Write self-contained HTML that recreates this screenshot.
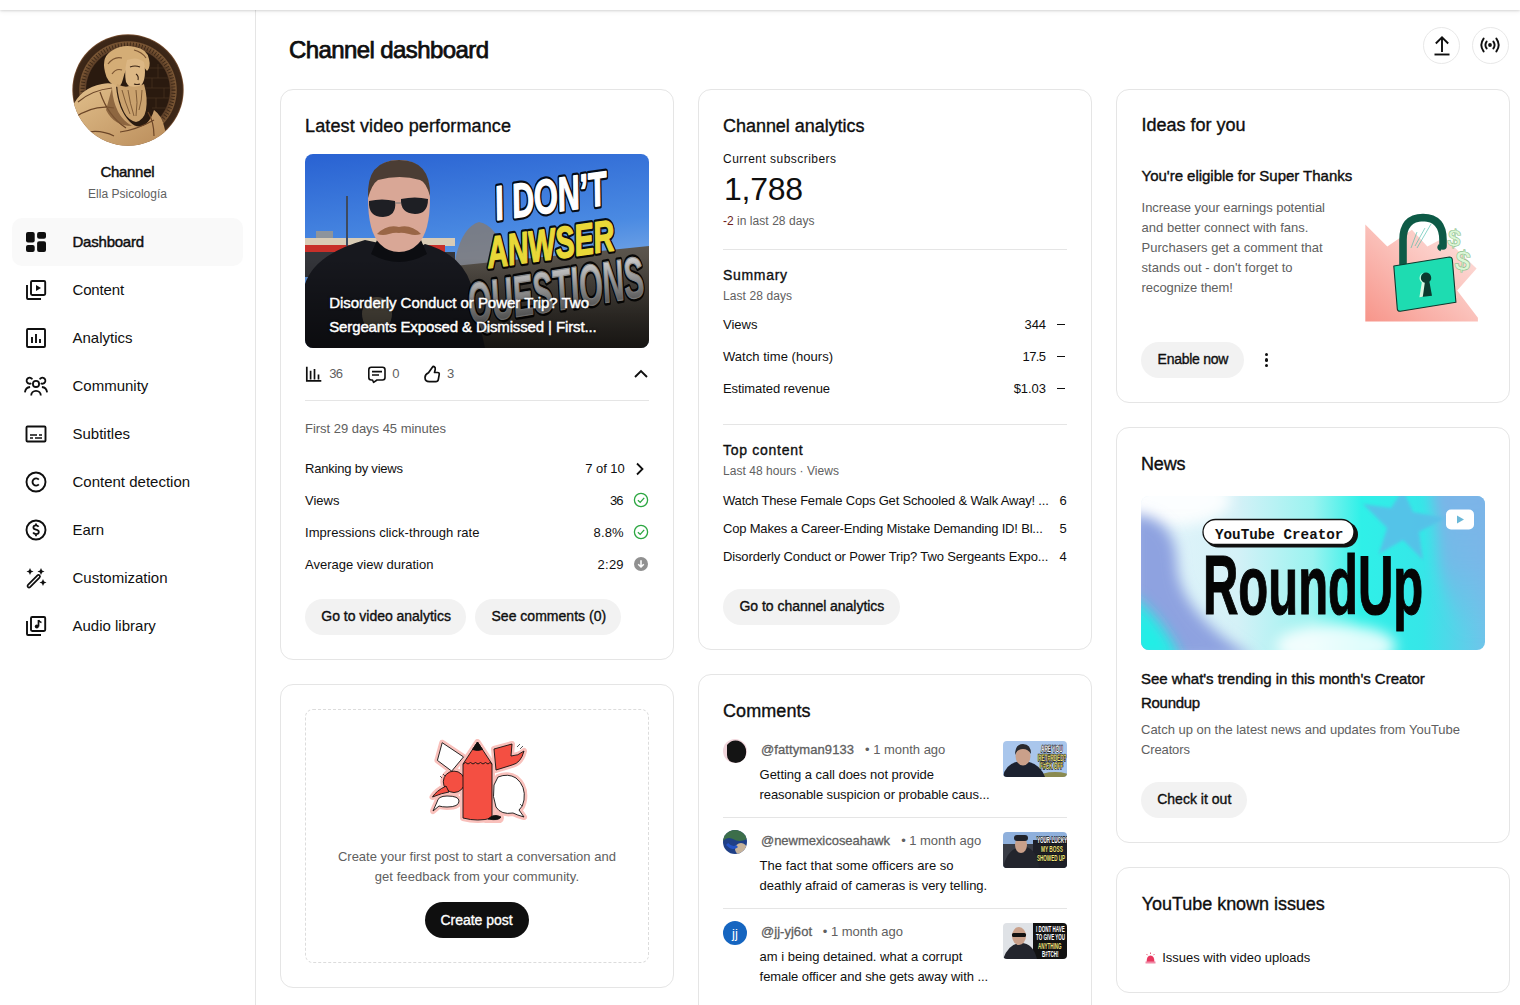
<!DOCTYPE html>
<html><head><meta charset="utf-8"><title>Channel dashboard - YouTube Studio</title>
<style>
html,body{margin:0;padding:0;}
body{width:1520px;height:1005px;overflow:hidden;position:relative;background:#fff;font-family:"Liberation Sans",sans-serif;}
.t{position:absolute;white-space:pre;}
.b{position:absolute;display:block;}
</style></head><body>
<div class="b" style="left:0px;top:0px;width:1520px;height:10px;background:#fff;box-shadow:0 1px 2px rgba(0,0,0,.12),0 2px 5px rgba(0,0,0,.05);z-index:5;"></div>
<div class="b" style="left:255px;top:0px;width:1px;height:1005px;background:#e5e5e5;"></div>
<svg class="b" style="left:72px;top:34px;" width="112" height="112" viewBox="0 0 112 112">
<defs>
<clipPath id="avc"><circle cx="56" cy="56" r="55.7"/></clipPath>
<radialGradient id="avr" cx="50%" cy="50%" r="50%">
<stop offset="0.74" stop-color="#2a1a0f"/><stop offset="0.76" stop-color="#5e4028"/><stop offset="0.86" stop-color="#7a5634"/><stop offset="0.88" stop-color="#3a2516"/><stop offset="0.97" stop-color="#3e2818"/><stop offset="1" stop-color="#946440"/>
</radialGradient>
<linearGradient id="avf" x1="0" y1="0" x2="1" y2="1"><stop offset="0" stop-color="#e2c08c"/><stop offset="1" stop-color="#b88a58"/></linearGradient>
</defs>
<g clip-path="url(#avc)">
<rect width="112" height="112" fill="url(#avr)"/>
<circle cx="56" cy="56" r="45.5" fill="none" stroke="#24150b" stroke-width="4" stroke-dasharray=".8 2.2" opacity=".7"/>
<path d="M72 34 H98 M70 44 H100 M72 54 H101 M74 64 H99 M80 74 H96 M86 30 V44 M80 44 V54 M92 54 V64 M84 64 V74" stroke="#4d3523" stroke-width=".6"/>
<path d="M33 38 q-4-16 8-22 q10-6 22-3 q12 2 14 12 q2 8 -2 12 q-6 -10 -16 -8 q-6 6 -8 16 q-2 8 -6 8 q-10 -4 -12 -15z" fill="#d4ad76"/>
<path d="M36 30 q6-8 14-6 M40 40 q4-6 10-4 M62 16 q8 2 12 8" stroke="#7a5432" stroke-width="1.2" fill="none"/>
<path d="M55 26 q10-4 17 2 q2 10 0 18 q-2 6 -6 8 q-8 2 -12 -6 q-2 -10 1 -22z" fill="#dcb784"/>
<path d="M58 33 q5-2 10 0 M64 40 q3 2 2 6 M62 50 q3 1 6 0" stroke="#3a2414" stroke-width="1.1" fill="none"/>
<path d="M45 50 q8 4 12 2 q8 2 15 -2 q4 14 2 26 q-2 10 -10 12 q-8 -2 -12 -10 q-6 -12 -7 -28z" fill="#caa26e"/>
<path d="M50 56 q3 12 8 24 M56 56 q2 14 6 26 M64 56 q2 12 0 26 M70 56 q0 10 -3 20" stroke="#6d4a2a" stroke-width=".8" fill="none"/>
<path d="M0 74 q8-20 30-24 q10 -2 14 2 q2 24 14 36 q8 8 16 2 q6 -6 8 -14 q8 6 10 16 l6 24 H0z" fill="url(#avf)"/>
<path d="M6 68 q14 -12 34 -14 M2 84 q20 -14 40 -10 M8 100 q18 -6 34 2 M28 58 q8 24 26 36 M48 98 q16 -2 34 -12 M76 78 q6 10 6 24" stroke="#6b4527" stroke-width="1.2" fill="none"/>
<path d="M40 54 q2 28 20 38 q-18 0 -26 -16z" fill="#7d5633" opacity=".8"/>
</g>
</svg>
<span class="t" style="left:100.50px;top:162px;font-size:15px;line-height:19px;color:#0f0f0f;letter-spacing:-0.313px;-webkit-text-stroke:0.45px #0f0f0f;">Channel</span>
<span class="t" style="left:88.00px;top:186px;font-size:12px;line-height:16px;color:#606060;letter-spacing:0.021px;">Ella Psicología</span>
<div class="b" style="left:12px;top:218px;width:231px;height:48px;background:#f9f9f9;border-radius:10px;"></div>
<span class="t" style="left:72.50px;top:232px;font-size:15px;line-height:19px;color:#0f0f0f;letter-spacing:-0.223px;-webkit-text-stroke:0.45px #0f0f0f;">Dashboard</span>
<span class="t" style="left:72.50px;top:280px;font-size:15px;line-height:19px;color:#0f0f0f;letter-spacing:-0.156px;">Content</span>
<span class="t" style="left:72.50px;top:328px;font-size:15px;line-height:19px;color:#0f0f0f;">Analytics</span>
<span class="t" style="left:72.50px;top:376px;font-size:15px;line-height:19px;color:#0f0f0f;">Community</span>
<span class="t" style="left:72.50px;top:424px;font-size:15px;line-height:19px;color:#0f0f0f;">Subtitles</span>
<span class="t" style="left:72.50px;top:472px;font-size:15px;line-height:19px;color:#0f0f0f;">Content detection</span>
<span class="t" style="left:72.50px;top:520px;font-size:15px;line-height:19px;color:#0f0f0f;">Earn</span>
<span class="t" style="left:72.50px;top:568px;font-size:15px;line-height:19px;color:#0f0f0f;">Customization</span>
<span class="t" style="left:72.50px;top:616px;font-size:15px;line-height:19px;color:#0f0f0f;">Audio library</span>
<svg class="b" style="left:24px;top:230px;" width="24" height="24" viewBox="0 0 24 24"><rect x="2" y="2" width="8.7" height="10.6" rx="2" fill="#0f0f0f"/><rect x="13.1" y="2" width="8.9" height="6.7" rx="2" fill="#0f0f0f"/><rect x="2" y="15.1" width="8.7" height="6.9" rx="2" fill="#0f0f0f"/><rect x="13.1" y="11.2" width="8.9" height="10.8" rx="2" fill="#0f0f0f"/></svg>
<svg class="b" style="left:24px;top:278px;" width="24" height="24" viewBox="0 0 24 24"><rect x="7" y="3" width="14.2" height="14" rx="1.2" fill="none" stroke="#0f0f0f" stroke-width="1.9"/><path d="M3 7 V20 a1 1 0 0 0 1 1 H17" fill="none" stroke="#0f0f0f" stroke-width="1.9"/><path d="M12 7 L17 10 L12 13z" fill="#0f0f0f"/></svg>
<svg class="b" style="left:24px;top:326px;" width="24" height="24" viewBox="0 0 24 24"><rect x="3" y="3" width="18" height="18" rx="1" fill="none" stroke="#0f0f0f" stroke-width="1.9"/><path d="M8 17 V11 M12 17 V8 M16 17 V13" stroke="#0f0f0f" stroke-width="1.9"/></svg>
<svg class="b" style="left:24px;top:374px;" width="24" height="24" viewBox="0 0 24 24"><circle cx="12" cy="9.9" r="3.1" fill="none" stroke="#0f0f0f" stroke-width="1.8"/><path d="M7.2 21.6 A4.8 4.8 0 0 1 16.8 21.6" fill="none" stroke="#0f0f0f" stroke-width="1.8"/><path d="M8.3 5.4 A3 3 0 1 0 7.3 9.2 M15.7 5.4 A3 3 0 1 1 16.7 9.2 M0.9 18.4 Q1.5 13.5 6.1 13 M23.1 18.4 Q22.5 13.5 17.9 13" fill="none" stroke="#0f0f0f" stroke-width="1.8"/></svg>
<svg class="b" style="left:24px;top:422px;" width="24" height="24" viewBox="0 0 24 24"><rect x="2.5" y="4.5" width="19" height="15" rx="1" fill="none" stroke="#0f0f0f" stroke-width="1.9"/><path d="M6 13 h7 M15 13 h3 M6 16 h3 M11 16 h7" stroke="#0f0f0f" stroke-width="1.7"/></svg>
<svg class="b" style="left:24px;top:470px;" width="24" height="24" viewBox="0 0 24 24"><circle cx="12" cy="12" r="9.5" fill="none" stroke="#0f0f0f" stroke-width="1.9"/><path d="M14.8 9.6 a3.6 3.6 0 1 0 0 4.8" fill="none" stroke="#0f0f0f" stroke-width="1.9"/></svg>
<svg class="b" style="left:24px;top:518px;" width="24" height="24" viewBox="0 0 24 24"><circle cx="12" cy="12" r="9.5" fill="none" stroke="#0f0f0f" stroke-width="1.9"/><path d="M14.6 8.8 q-1-1.4 -2.6-1.4 q-2.6 0 -2.6 2 q0 1.6 2.6 2.2 q2.8 .6 2.8 2.4 q0 2.1 -2.8 2.1 q-1.9 0 -2.9 -1.5 M12 5.6 V7.4 M12 16.3 V18.2" fill="none" stroke="#0f0f0f" stroke-width="1.8"/></svg>
<svg class="b" style="left:24px;top:566px;" width="24" height="24" viewBox="0 0 24 24"><path d="M5 20 L14.5 10.5" stroke="#0f0f0f" stroke-width="4.6" stroke-linecap="round"/><path d="M5 20 L14.5 10.5" stroke="#fff" stroke-width="1.2" stroke-linecap="round"/><path d="M6 2 l1.1 2.4 2.4 1.1 -2.4 1.1 -1.1 2.4 -1.1 -2.4 -2.4 -1.1 2.4 -1.1z M17 2 l1.1 2.4 2.4 1.1 -2.4 1.1 -1.1 2.4 -1.1 -2.4 -2.4 -1.1 2.4 -1.1z M19 13 l1.1 2.4 2.4 1.1 -2.4 1.1 -1.1 2.4 -1.1 -2.4 -2.4 -1.1 2.4 -1.1z" fill="#0f0f0f"/></svg>
<svg class="b" style="left:24px;top:614px;" width="24" height="24" viewBox="0 0 24 24"><rect x="7" y="3" width="14.2" height="14" rx="1.2" fill="none" stroke="#0f0f0f" stroke-width="1.9"/><path d="M3 7 V20 a1 1 0 0 0 1 1 H17" fill="none" stroke="#0f0f0f" stroke-width="1.9"/><path d="M14.5 6 V12.5" stroke="#0f0f0f" stroke-width="1.7"/><circle cx="12.8" cy="12.6" r="2" fill="#0f0f0f"/><path d="M14.5 6 q1 2 3 2.5" stroke="#0f0f0f" stroke-width="1.5" fill="none"/></svg>
<span class="t" style="left:289.00px;top:35px;font-size:24px;line-height:29px;color:#0f0f0f;letter-spacing:-0.594px;-webkit-text-stroke:0.75px #0f0f0f;">Channel dashboard</span>
<div class="b" style="left:1423.0px;top:26.5px;width:37px;height:37px;border:1px solid #e8e8e8;border-radius:50%;box-sizing:border-box;"></div>
<div class="b" style="left:1471.5px;top:26.5px;width:37px;height:37px;border:1px solid #e8e8e8;border-radius:50%;box-sizing:border-box;"></div>
<svg class="b" style="left:1429.5px;top:33px;" width="24" height="24" viewBox="0 0 24 24"><path d="M12 4.5 V19 M5.8 10.5 L12 4.3 L18.2 10.5" fill="none" stroke="#0f0f0f" stroke-width="1.9"/><path d="M4.5 21.5 H19.5" stroke="#0f0f0f" stroke-width="1.9"/></svg>
<svg class="b" style="left:1478px;top:33px;" width="24" height="24" viewBox="0 0 24 24"><circle cx="12" cy="12" r="1.9" fill="#0f0f0f"/><path d="M8.6 8.6 q-2.4 3.4 0 6.8 M15.4 8.6 q2.4 3.4 0 6.8 M5.6 5.6 q-4.6 6.4 0 12.8 M18.4 5.6 q4.6 6.4 0 12.8" fill="none" stroke="#0f0f0f" stroke-width="1.9" stroke-linecap="round"/></svg>
<div class="b" style="left:280px;top:89px;width:394px;height:571px;border:1px solid #e5e5e5;border-radius:13px;box-sizing:border-box;background:#fff;"></div>
<div class="b" style="left:280px;top:684px;width:394px;height:304px;border:1px solid #e5e5e5;border-radius:13px;box-sizing:border-box;background:#fff;"></div>
<div class="b" style="left:698px;top:89px;width:394px;height:561px;border:1px solid #e5e5e5;border-radius:13px;box-sizing:border-box;background:#fff;"></div>
<div class="b" style="left:698px;top:674px;width:394px;height:400px;border:1px solid #e5e5e5;border-radius:13px;box-sizing:border-box;background:#fff;"></div>
<div class="b" style="left:1116px;top:89px;width:394px;height:314px;border:1px solid #e5e5e5;border-radius:13px;box-sizing:border-box;background:#fff;"></div>
<div class="b" style="left:1116px;top:427px;width:394px;height:416px;border:1px solid #e5e5e5;border-radius:13px;box-sizing:border-box;background:#fff;"></div>
<div class="b" style="left:1116px;top:867px;width:394px;height:126px;border:1px solid #e5e5e5;border-radius:13px;box-sizing:border-box;background:#fff;"></div>
<span class="t" style="left:305.00px;top:115px;font-size:18px;line-height:22px;color:#0f0f0f;letter-spacing:0.125px;-webkit-text-stroke:0.35px #0f0f0f;">Latest video performance</span>
<svg class="b" style="left:305px;top:154px;" width="344" height="194" viewBox="0 0 344 194">
<defs>
<clipPath id="thc"><rect width="344" height="194" rx="8"/></clipPath>
<linearGradient id="sky" x1="0" y1="0" x2=".2" y2="1"><stop offset="0" stop-color="#2962d2"/><stop offset=".5" stop-color="#4a8ae2"/><stop offset="1" stop-color="#a8c8ea"/></linearGradient>
<linearGradient id="gnd" x1="0" y1="0" x2="0" y2="1"><stop offset="0" stop-color="#5c564e"/><stop offset="1" stop-color="#2e2a25"/></linearGradient>
<linearGradient id="ttl" x1="0" y1="0" x2="0" y2="1"><stop offset="0" stop-color="#000" stop-opacity="0"/><stop offset="1" stop-color="#000" stop-opacity=".5"/></linearGradient>
<linearGradient id="qg" x1="0" y1="0" x2="0" y2="1"><stop offset="0" stop-color="#e6e6e6"/><stop offset=".6" stop-color="#9a9a9a"/><stop offset="1" stop-color="#5a5a5a"/></linearGradient>
</defs>
<g clip-path="url(#thc)">
<rect width="344" height="194" fill="url(#sky)"/>
<rect x="11" y="77" width="17" height="8" fill="#8d949c"/>
<rect x="0" y="84" width="150" height="8" fill="#d9ccb6"/>
<rect x="0" y="91" width="140" height="7" fill="#c8302a"/>
<rect x="0" y="98" width="150" height="25" fill="#34353a"/>
<rect x="41" y="42" width="2" height="50" fill="#3e4a5e"/>
<path d="M148 118 q6-44 26-50 q22 4 30 50z" fill="#857b72" opacity=".8"/>
<path d="M130 114 L344 92 V194 H130z" fill="url(#gnd)"/>
<path d="M0 130 q10-30 60-44 l28 6 q20 6 32 -2 q36 10 46 40 L180 194 H0z" fill="#17181e"/>
<path d="M72 86 q22 14 44 0 l6 14 q-28 16 -56 0z" fill="#0c0d11"/>
<path d="M63 44 q0-38 31-38 q31 0 31 38 q0 34 -12 46 q-8 8 -19 8 q-11 0 -19 -8 q-12 -12 -12 -46z" fill="#d9a796"/>
<path d="M63 44 q-2-38 31-38 q32 0 31 36 q-4 -14 -10 -16 q-20 -6 -42 0 q-6 4 -10 18z" fill="#4b3d34"/>
<path d="M64 47 q13-3 26 0 q2 15 -12 16 q-15 0 -14 -16z M96 45 q14-3 27 0 q0 15 -13 15 q-15 -1 -14 -15z" fill="#1e1f24"/><path d="M90 49 H96" stroke="#777" stroke-width="1"/>
<path d="M72 80 q10-10 22 -7 q12 -3 22 7 q-6 2 -12 0 q-8 -2 -10 -1 q-4 -1 -10 1 q-6 2 -12 0z" fill="#9a6646"/>
<ellipse cx="72" cy="160" rx="15" ry="17" fill="#6a6050" opacity=".75"/>
<g font-family="Liberation Sans" font-weight="700" font-style="italic" stroke-linejoin="round">
<g stroke="#000" stroke-width="6" fill="#000" opacity=".9">
<text transform="translate(192,66) rotate(-8) scale(.64,1)" font-size="48">I DON’T</text>
<text transform="translate(184,114) rotate(-8) scale(.655,1)" font-size="44">ANWSER</text>
<text transform="translate(166,170) rotate(-9) scale(.52,1)" font-size="58">QUESTIONS</text>
</g>
<text transform="translate(192,66) rotate(-8) scale(.64,1)" font-size="48" fill="#fff" stroke="#fff" stroke-width="1.5">I DON’T</text>
<text transform="translate(184,114) rotate(-8) scale(.655,1)" font-size="44" fill="#e9d838" stroke="#e9d838" stroke-width="1.5">ANWSER</text>
<text transform="translate(166,170) rotate(-9) scale(.52,1)" font-size="58" fill="url(#qg)" stroke="#9a9a9a" stroke-width="1.2">QUESTIONS</text>
</g>
<rect x="0" y="104" width="344" height="90" fill="url(#ttl)"/>
</g>
</svg>
<span class="t" style="left:329.20px;top:293px;font-size:15px;line-height:19px;color:#fff;letter-spacing:-0.024px;-webkit-text-stroke:0.45px #fff;text-shadow:0 0 3px rgba(0,0,0,.6);">Disorderly Conduct or Power Trip? Two</span>
<span class="t" style="left:329.20px;top:317px;font-size:15px;line-height:19px;color:#fff;letter-spacing:-0.124px;-webkit-text-stroke:0.45px #fff;text-shadow:0 0 3px rgba(0,0,0,.6);">Sergeants Exposed &amp; Dismissed | First...</span>
<svg class="b" style="left:300px;top:360px;" width="30" height="26" viewBox="0 0 30 26"><path d="M6.8 6.7 V20.8 H21.3" fill="none" stroke="#0f0f0f" stroke-width="1.7"/><path d="M10.6 19.5 V10.7 M14.5 19.5 V9 M18.5 19.5 V14.6" stroke="#0f0f0f" stroke-width="1.7"/></svg>
<span class="t" style="left:329.30px;top:365px;font-size:13px;line-height:17px;color:#606060;letter-spacing:-0.759px;">36</span>
<svg class="b" style="left:360px;top:360px;" width="30" height="26" viewBox="0 0 30 26"><path d="M11.3 7.3 H22.5 Q25 7.3 25 9.8 V17.5 Q25 20 22.5 20 H17 L13.6 22.3 L12.5 20 H11.3 Q8.8 20 8.8 17.5 V9.8 Q8.8 7.3 11.3 7.3z" fill="none" stroke="#0f0f0f" stroke-width="1.6" stroke-linejoin="round"/><path d="M12 11.6 H22 M12 15 H19" stroke="#0f0f0f" stroke-width="1.6"/></svg>
<span class="t" style="left:392.30px;top:365px;font-size:13px;line-height:17px;color:#606060;">0</span>
<svg class="b" style="left:420px;top:360px;" width="30" height="26" viewBox="0 0 30 26"><path d="M8.5 12.8 L12.2 7.4 Q13.2 6 14.4 6.8 Q15.6 7.7 15.2 9.6 L14.5 12.5 H17.6 Q19.6 12.5 19.2 14.6 L18.3 19.6 Q17.9 21.7 15.8 21.7 H9.4 Q5 21.7 5 17.5 Q5 14.5 8.5 12.8z" fill="none" stroke="#0f0f0f" stroke-width="1.7" stroke-linejoin="round"/></svg>
<span class="t" style="left:447.00px;top:365px;font-size:13px;line-height:17px;color:#606060;">3</span>
<svg class="b" style="left:629px;top:362px;" width="24" height="24" viewBox="0 0 24 24"><path d="M6 15 L12 9 L18 15" fill="none" stroke="#0f0f0f" stroke-width="1.9"/></svg>
<div class="b" style="left:305px;top:400px;width:344px;height:1px;background:#e5e5e5;"></div>
<span class="t" style="left:305.00px;top:420px;font-size:13px;line-height:17px;color:#606060;letter-spacing:-0.027px;">First 29 days 45 minutes</span>
<span class="t" style="left:305.00px;top:460px;font-size:13px;line-height:17px;color:#0f0f0f;letter-spacing:-0.210px;">Ranking by views</span>
<span class="t" style="left:305.00px;top:492px;font-size:13px;line-height:17px;color:#0f0f0f;">Views</span>
<span class="t" style="left:305.00px;top:524px;font-size:13px;line-height:17px;color:#0f0f0f;letter-spacing:0.038px;">Impressions click-through rate</span>
<span class="t" style="left:305.00px;top:556px;font-size:13px;line-height:17px;color:#0f0f0f;">Average view duration</span>
<span class="t" style="left:585.20px;top:460px;font-size:13px;line-height:17px;color:#0f0f0f;letter-spacing:-0.043px;">7 of 10</span>
<span class="t" style="left:609.90px;top:492px;font-size:13px;line-height:17px;color:#0f0f0f;letter-spacing:-0.759px;">36</span>
<span class="t" style="left:593.60px;top:524px;font-size:13px;line-height:17px;color:#0f0f0f;letter-spacing:0.123px;">8.8%</span>
<span class="t" style="left:597.60px;top:556px;font-size:13px;line-height:17px;color:#0f0f0f;letter-spacing:0.233px;">2:29</span>
<svg class="b" style="left:627.5px;top:457px;" width="24" height="24" viewBox="0 0 24 24"><path d="M9 6.5 L14.5 12 L9 17.5" fill="none" stroke="#0f0f0f" stroke-width="1.8"/></svg>
<svg class="b" style="left:633px;top:492px;" width="16" height="16" viewBox="0 0 16 16"><circle cx="8" cy="8" r="6.6" fill="none" stroke="#2ba640" stroke-width="1.3"/><path d="M4.9 8.2 L7.2 10.4 L11.2 5.9" fill="none" stroke="#2ba640" stroke-width="1.3"/></svg>
<svg class="b" style="left:633px;top:524px;" width="16" height="16" viewBox="0 0 16 16"><circle cx="8" cy="8" r="6.6" fill="none" stroke="#2ba640" stroke-width="1.3"/><path d="M4.9 8.2 L7.2 10.4 L11.2 5.9" fill="none" stroke="#2ba640" stroke-width="1.3"/></svg>
<svg class="b" style="left:633px;top:556px;" width="16" height="16" viewBox="0 0 16 16"><circle cx="8" cy="8" r="7" fill="#909090"/><path d="M8 4.2 V10.8 M5.2 8.2 L8 11 L10.8 8.2" fill="none" stroke="#fff" stroke-width="1.5"/></svg>
<div class="b" style="left:305px;top:599px;width:161px;height:36px;background:#f2f2f2;border-radius:18.0px;"></div>
<span class="t" style="left:321.30px;top:607px;font-size:14px;line-height:18px;color:#0f0f0f;letter-spacing:-0.018px;-webkit-text-stroke:0.35px #0f0f0f;">Go to video analytics</span>
<div class="b" style="left:475px;top:599px;width:146px;height:36px;background:#f2f2f2;border-radius:18.0px;"></div>
<span class="t" style="left:491.50px;top:607px;font-size:14px;line-height:18px;color:#0f0f0f;letter-spacing:0.015px;-webkit-text-stroke:0.35px #0f0f0f;">See comments (0)</span>
<div class="b" style="left:305px;top:709px;width:344px;height:254px;border:1px dashed #dcdcdc;border-radius:8px;box-sizing:border-box;"></div>
<svg class="b" style="left:428px;top:739px;" width="100" height="84" viewBox="0 0 100 84"><g fill="none" stroke="#f9c0bb" stroke-width="6" stroke-linejoin="round">
<path d="M14.2 3.7 L35.5 17.9 L23.7 32.1 L9.4 21.4z" />
<path d="M66 10 L84 5 L83 17 Q90 17 96 12 Q93 24 84 26 L68 31z" />
<path d="M70 38 q10-4 18 1 q10 8 8 22 q-1 7 -5 10 l5 7 q-7 -2 -11 -4 q-12 2 -17 -6 q-4 -10 -2 -22z" />
<circle cx="26" cy="42.8" r="10.7" />
<path d="M18 47 Q8 52 4.5 58 Q14 54 21 53z" />
<path d="M9 63 q1-6 10-6 q12 0 12 5 q0 6 -12 6 q-5 0 -8 -1 l-6 5z" />
<path d="M35 25 L49.5 3 L64 25 V79 q-14 4 -29 0z" />
<ellipse cx="65" cy="79" rx="8" ry="4"/></g>
<g stroke="#111" stroke-width=".9" stroke-linejoin="round">
<path d="M14.2 3.7 L35.5 17.9 L23.7 32.1 L9.4 21.4z" fill="#fff"/>
<path d="M66 10 L84 5 L83 17 Q90 17 96 12 Q93 24 84 26 L68 31z" fill="#f44f42"/>
<path d="M70 38 q10-4 18 1 q10 8 8 22 q-1 7 -5 10 l5 7 q-7 -2 -11 -4 q-12 2 -17 -6 q-4 -10 -2 -22z" fill="#fff"/>
<circle cx="26" cy="42.8" r="10.7" fill="#f44f42"/>
<path d="M18 47 Q8 52 4.5 58 Q14 54 21 53z" fill="#f44f42"/>
<path d="M9 63 q1-6 10-6 q12 0 12 5 q0 6 -12 6 q-5 0 -8 -1 l-6 5z" fill="#fff"/>
<path d="M35 25 L49.5 3 L64 25 V79 q-14 4 -29 0z" fill="#f44f42"/>

<path d="M44.5 10.5 L49.5 3 L54.5 10.5 q-5 2 -10 0z" fill="#111"/>
<path d="M35 25 q2.5 -3 5 0 q2.5 -3 5 0 q2.5 -3 5 0 q2.5 -3 5 0 q2.5 -3 5 0 q2 -3 4 0" fill="none"/>
<path d="M60 80 q6 -6 13 -2 q-2 4 -13 2z" fill="#111"/>
<path d="M89 8 l3 -3 M92 10 l3 -3 M12 37 l2 2 M15 35 l2 2 M92 65 l2 2" fill="none" stroke-width=".7"/>
</g>
</svg>
<span class="t" style="left:337.90px;top:848px;font-size:13px;line-height:17px;color:#606060;letter-spacing:0.011px;">Create your first post to start a conversation and</span>
<span class="t" style="left:374.70px;top:868px;font-size:13px;line-height:17px;color:#606060;letter-spacing:0.070px;">get feedback from your community.</span>
<div class="b" style="left:425px;top:902px;width:104px;height:36px;background:#0f0f0f;border-radius:18.0px;"></div>
<span class="t" style="left:440.40px;top:911px;font-size:14px;line-height:18px;color:#fff;letter-spacing:-0.017px;-webkit-text-stroke:0.35px #fff;">Create post</span>
<span class="t" style="left:723.00px;top:115px;font-size:18px;line-height:22px;color:#0f0f0f;letter-spacing:-0.037px;-webkit-text-stroke:0.35px #0f0f0f;">Channel analytics</span>
<span class="t" style="left:723.00px;top:151px;font-size:12px;line-height:16px;color:#0f0f0f;letter-spacing:0.461px;">Current subscribers</span>
<span class="t" style="left:724.00px;top:170px;font-size:32px;line-height:38px;color:#0f0f0f;letter-spacing:-0.270px;">1,788</span>
<span class="t" style="left:723.00px;top:213px;font-size:12px;line-height:16px;color:#6e1d1d;">-2</span>
<span class="t" style="left:737.00px;top:213px;font-size:12px;line-height:16px;color:#606060;letter-spacing:0.056px;">in last 28 days</span>
<div class="b" style="left:723px;top:249px;width:344px;height:1px;background:#e5e5e5;"></div>
<span class="t" style="left:723.00px;top:266px;font-size:14px;line-height:18px;color:#0f0f0f;letter-spacing:0.684px;-webkit-text-stroke:0.35px #0f0f0f;">Summary</span>
<span class="t" style="left:723.00px;top:288px;font-size:12px;line-height:16px;color:#606060;letter-spacing:0.087px;">Last 28 days</span>
<span class="t" style="left:723.00px;top:316px;font-size:13px;line-height:17px;color:#0f0f0f;">Views</span>
<span class="t" style="left:1024.50px;top:316px;font-size:13px;line-height:17px;color:#0f0f0f;letter-spacing:-0.095px;">344</span>
<div class="b" style="left:1057px;top:324.0px;width:8px;height:1.2px;background:#0f0f0f;"></div>
<span class="t" style="left:723.00px;top:348px;font-size:13px;line-height:17px;color:#0f0f0f;letter-spacing:0.040px;">Watch time (hours)</span>
<span class="t" style="left:1022.50px;top:348px;font-size:13px;line-height:17px;color:#0f0f0f;letter-spacing:-0.601px;">17.5</span>
<div class="b" style="left:1057px;top:356.0px;width:8px;height:1.2px;background:#0f0f0f;"></div>
<span class="t" style="left:723.00px;top:380px;font-size:13px;line-height:17px;color:#0f0f0f;letter-spacing:-0.087px;">Estimated revenue</span>
<span class="t" style="left:1013.70px;top:380px;font-size:13px;line-height:17px;color:#0f0f0f;letter-spacing:-0.058px;">$1.03</span>
<div class="b" style="left:1057px;top:388.0px;width:8px;height:1.2px;background:#0f0f0f;"></div>
<div class="b" style="left:723px;top:424px;width:344px;height:1px;background:#e5e5e5;"></div>
<span class="t" style="left:723.00px;top:441px;font-size:14px;line-height:18px;color:#0f0f0f;letter-spacing:0.722px;-webkit-text-stroke:0.35px #0f0f0f;">Top content</span>
<span class="t" style="left:723.00px;top:463px;font-size:12px;line-height:16px;color:#606060;letter-spacing:0.041px;">Last 48 hours · Views</span>
<span class="t" style="left:723.00px;top:492px;font-size:13px;line-height:17px;color:#0f0f0f;letter-spacing:-0.196px;">Watch These Female Cops Get Schooled &amp; Walk Away! ...</span>
<span class="t" style="left:1059.57px;top:492px;font-size:13px;line-height:17px;color:#0f0f0f;">6</span>
<span class="t" style="left:723.00px;top:520px;font-size:13px;line-height:17px;color:#0f0f0f;letter-spacing:-0.186px;">Cop Makes a Career-Ending Mistake Demanding ID! Bl...</span>
<span class="t" style="left:1059.57px;top:520px;font-size:13px;line-height:17px;color:#0f0f0f;">5</span>
<span class="t" style="left:723.00px;top:548px;font-size:13px;line-height:17px;color:#0f0f0f;letter-spacing:-0.140px;">Disorderly Conduct or Power Trip? Two Sergeants Expo...</span>
<span class="t" style="left:1059.57px;top:548px;font-size:13px;line-height:17px;color:#0f0f0f;">4</span>
<div class="b" style="left:723px;top:589px;width:177px;height:36px;background:#f2f2f2;border-radius:18.0px;"></div>
<span class="t" style="left:739.50px;top:597px;font-size:14px;line-height:18px;color:#0f0f0f;letter-spacing:-0.033px;-webkit-text-stroke:0.35px #0f0f0f;">Go to channel analytics</span>
<span class="t" style="left:723.00px;top:700px;font-size:18px;line-height:22px;color:#0f0f0f;letter-spacing:0.083px;-webkit-text-stroke:0.35px #0f0f0f;">Comments</span>
<span class="t" style="left:761.00px;top:741px;font-size:13px;line-height:17px;color:#606060;letter-spacing:0.086px;-webkit-text-stroke:0.3px #606060;">@fattyman9133</span>
<span class="t" style="left:865.00px;top:741px;font-size:13px;line-height:17px;color:#606060;letter-spacing:-0.012px;">• 1 month ago</span>
<span class="t" style="left:759.60px;top:766px;font-size:13px;line-height:17px;color:#0f0f0f;letter-spacing:-0.040px;">Getting a call does not provide</span>
<span class="t" style="left:759.60px;top:786px;font-size:13px;line-height:17px;color:#0f0f0f;letter-spacing:-0.088px;">reasonable suspicion or probable caus...</span>
<span class="t" style="left:761.00px;top:832px;font-size:13px;line-height:17px;color:#606060;letter-spacing:-0.033px;-webkit-text-stroke:0.3px #606060;">@newmexicoseahawk</span>
<span class="t" style="left:901.20px;top:832px;font-size:13px;line-height:17px;color:#606060;letter-spacing:-0.037px;">• 1 month ago</span>
<span class="t" style="left:759.60px;top:857px;font-size:13px;line-height:17px;color:#0f0f0f;letter-spacing:0.040px;">The fact that some officers are so</span>
<span class="t" style="left:759.60px;top:877px;font-size:13px;line-height:17px;color:#0f0f0f;letter-spacing:-0.018px;">deathly afraid of cameras is very telling.</span>
<span class="t" style="left:761.00px;top:923px;font-size:13px;line-height:17px;color:#606060;letter-spacing:0.030px;-webkit-text-stroke:0.3px #606060;">@jj-yj6ot</span>
<span class="t" style="left:822.80px;top:923px;font-size:13px;line-height:17px;color:#606060;letter-spacing:-0.020px;">• 1 month ago</span>
<span class="t" style="left:759.60px;top:948px;font-size:13px;line-height:17px;color:#0f0f0f;letter-spacing:-0.011px;">am i being detained. what a corrupt</span>
<span class="t" style="left:759.60px;top:968px;font-size:13px;line-height:17px;color:#0f0f0f;letter-spacing:-0.060px;">female officer and she gets away with ...</span>
<svg class="b" style="left:723px;top:739px;" width="24" height="24" viewBox="0 0 24 24"><clipPath id="ca1"><circle cx="12" cy="12" r="12"/></clipPath><g clip-path="url(#ca1)"><rect width="24" height="24" fill="#f1d6dc"/><path d="M4 6 q6-7 14-3 q6 4 5 12 q-1 9 -10 9 q-9 -1 -9 -8z" fill="#141414"/></g></svg>
<svg class="b" style="left:723px;top:830px;" width="24" height="24" viewBox="0 0 24 24"><clipPath id="ca2"><circle cx="12" cy="12" r="12"/></clipPath><g clip-path="url(#ca2)"><rect width="24" height="24" fill="#1f3f86"/><path d="M0 0 H24 V9 q-8 4 -14 0 q-6 -3 -10 2z" fill="#3c6e4a"/><circle cx="18" cy="19" r="6" fill="#c7b39a"/><path d="M4 14 q6 6 10 2" stroke="#2453c5" stroke-width="3" fill="none"/></g></svg>
<svg class="b" style="left:723px;top:921px;" width="24" height="24" viewBox="0 0 24 24"><circle cx="12" cy="12" r="12" fill="#1565c0"/><text x="12" y="16.5" text-anchor="middle" font-family="Liberation Sans" font-size="13" fill="#fff">jj</text></svg>
<div class="b" style="left:723px;top:817px;width:344px;height:1px;background:#e5e5e5;"></div>
<div class="b" style="left:723px;top:908px;width:344px;height:1px;background:#e5e5e5;"></div>
<svg class="b" style="left:1003px;top:741px;" width="64" height="36" viewBox="0 0 64 36"><clipPath id="ct1"><rect width="64" height="36" rx="4"/></clipPath><g clip-path="url(#ct1)">
<rect width="64" height="36" fill="#a9c6ec"/><ellipse cx="52" cy="36" rx="16" ry="5" fill="#8a8a50"/>
<path d="M0 36 q2-14 18-16 q18 0 24 16z" fill="#1c2230"/><ellipse cx="20" cy="15" rx="7.5" ry="9.5" fill="#caa08a"/><path d="M12 14 q0-11 8-11 q8 0 8 10 q-3-5 -8 -5 q-6 0 -8 6z" fill="#2a2a2e"/>
<g font-family="Liberation Sans" font-weight="700" stroke="#111" stroke-width="1.4" paint-order="stroke" text-rendering="geometricPrecision">
<text transform="translate(38,11) scale(.5,1)" font-size="9.5" fill="#fff">ARE YOU</text>
<text transform="translate(35,19.5) scale(.5,1)" font-size="9.5" fill="#eee37a">RET#RDED?</text>
<text transform="translate(37,28) scale(.5,1)" font-size="9.5" fill="#eee37a">F#CK OFF</text></g></g></svg>
<svg class="b" style="left:1003px;top:832px;" width="64" height="36" viewBox="0 0 64 36"><clipPath id="ct2"><rect width="64" height="36" rx="4"/></clipPath><g clip-path="url(#ct2)">
<rect width="64" height="36" fill="#8fb0dc"/><rect y="12" width="64" height="24" fill="#3a3d46"/><rect x="30" y="8" width="34" height="28" fill="#1e2028"/>
<path d="M0 36 q4-20 20-22 q14 2 16 22z" fill="#23252d"/><ellipse cx="18" cy="13" rx="6" ry="8" fill="#c9a08a"/><rect x="11" y="3" width="14" height="6" rx="3" fill="#20222a"/>
<g font-family="Liberation Sans" font-weight="700" stroke="#111" stroke-width="1.4" paint-order="stroke">
<text transform="translate(34,11) scale(.48,1)" font-size="9.5" fill="#fff">YOUR LUCKY</text>
<text transform="translate(38,20) scale(.5,1)" font-size="9.5" fill="#eee37a">MY BOSS</text>
<text transform="translate(34,29) scale(.48,1)" font-size="9.5" fill="#eee37a">SHOWED UP</text></g></g></svg>
<svg class="b" style="left:1003px;top:923px;" width="64" height="36" viewBox="0 0 64 36"><clipPath id="ct3"><rect width="64" height="36" rx="4"/></clipPath><g clip-path="url(#ct3)">
<rect width="64" height="36" fill="#dfe2e6"/><rect x="30" width="34" height="36" fill="#121212"/>
<path d="M0 36 q6-16 18-16 q12 0 16 16z" fill="#23252d"/><ellipse cx="16" cy="13" rx="7" ry="9" fill="#c9a08a"/><rect x="9" y="10" width="14" height="4" rx="1.5" fill="#111"/>
<g font-family="Liberation Sans" font-weight="700" fill="#fff">
<text transform="translate(33,9) scale(.5,1)" font-size="9">I DONT HAVE</text>
<text transform="translate(33,17) scale(.5,1)" font-size="9">TO GIVE YOU</text>
<text transform="translate(35,25.5) scale(.5,1)" font-size="9" fill="#eee37a">ANYTHING</text>
<text transform="translate(39,34) scale(.5,1)" font-size="9">B#TCH!</text></g></g></svg>
<span class="t" style="left:1141.60px;top:114px;font-size:18px;line-height:22px;color:#0f0f0f;letter-spacing:-0.022px;-webkit-text-stroke:0.35px #0f0f0f;">Ideas for you</span>
<span class="t" style="left:1141.60px;top:166px;font-size:15px;line-height:19px;color:#0f0f0f;letter-spacing:-0.024px;-webkit-text-stroke:0.4px #0f0f0f;">You&#x27;re eligible for Super Thanks</span>
<span class="t" style="left:1141.60px;top:199px;font-size:13px;line-height:17px;color:#606060;letter-spacing:-0.052px;">Increase your earnings potential</span>
<span class="t" style="left:1141.60px;top:219px;font-size:13px;line-height:17px;color:#606060;letter-spacing:0.024px;">and better connect with fans.</span>
<span class="t" style="left:1141.60px;top:239px;font-size:13px;line-height:17px;color:#606060;letter-spacing:0.016px;">Purchasers get a comment that</span>
<span class="t" style="left:1141.60px;top:259px;font-size:13px;line-height:17px;color:#606060;letter-spacing:0.014px;">stands out - don&#x27;t forget to</span>
<span class="t" style="left:1141.60px;top:279px;font-size:13px;line-height:17px;color:#606060;letter-spacing:-0.092px;">recognize them!</span>
<svg class="b" style="left:1365px;top:212px;" width="120" height="112" viewBox="0 0 120 112">
<defs><linearGradient id="pk" x1="0" y1="1" x2="1" y2="0"><stop offset="0" stop-color="#f7958a"/><stop offset=".6" stop-color="#fbc9c3"/><stop offset="1" stop-color="#fde6e3"/></linearGradient></defs>
<path d="M0.3 12.6 L22.3 34.6 L46.9 17.8 L62.4 34.6 L79.3 25.5 L111.6 56.6 L92.2 78.6 L112.9 105.7 L112.9 109.6 L0.3 109.6z" fill="url(#pk)"/>
<path d="M38 52 V28 q0-22 20-22.5 q20 .5 20 22.5 V34" fill="none" stroke="#0d5a46" stroke-width="7.6" stroke-linecap="round"/>
<path d="M75 33 q-3 3 1 5" fill="none" stroke="#0d5a46" stroke-width="3"/>
<path d="M52 20 L46 36 M66 12 L52 36 M60 16 L50 34" stroke="#3fb9a4" stroke-width=".6"/>
<path d="M28.8 54 L84.4 45 Q87 45 87.3 47.5 L90.9 90.2 L35.3 99.3 Q32.5 99.5 32.3 97 z" fill="#1edcb1" stroke="#0b3a2e" stroke-width="1.1" stroke-linejoin="round"/>
<path d="M61 60.4 a5.4 5.4 0 0 1 3.4 9.4 l2.6 14 l-11 1.3 l2.4 -14.8 a5.4 5.4 0 0 1 2.6 -9.9z" fill="#0b3a2e"/>
<path d="M58.6 60.8 a5.4 5.4 0 0 0 -1.8 9.6 l-2.4 14.8 l3.4 -.4 l2 -14 a5.4 5.4 0 0 1 -1.2 -10z" fill="#d9f5e0"/>
<g fill="#dcf6d6" stroke="#8cc08c" stroke-width=".6" font-family="Liberation Sans" font-weight="700">
<text x="82.5" y="35" font-size="24" transform="rotate(8 92 27)">$</text><text x="90" y="59" font-size="28" transform="rotate(8 101 49)">$</text></g>
</svg>
<div class="b" style="left:1141px;top:342px;width:103px;height:36px;background:#f2f2f2;border-radius:18.0px;"></div>
<span class="t" style="left:1157.60px;top:350px;font-size:14px;line-height:18px;color:#0f0f0f;letter-spacing:-0.263px;-webkit-text-stroke:0.35px #0f0f0f;">Enable now</span>
<div class="b" style="left:1265.1px;top:353.0px;width:3.4px;height:3.4px;background:#0f0f0f;border-radius:50%;"></div>
<div class="b" style="left:1265.1px;top:358.3px;width:3.4px;height:3.4px;background:#0f0f0f;border-radius:50%;"></div>
<div class="b" style="left:1265.1px;top:363.6px;width:3.4px;height:3.4px;background:#0f0f0f;border-radius:50%;"></div>
<span class="t" style="left:1141.00px;top:453px;font-size:18px;line-height:22px;color:#0f0f0f;letter-spacing:-0.169px;-webkit-text-stroke:0.35px #0f0f0f;">News</span>
<svg class="b" style="left:1141px;top:496px;" width="344" height="154" viewBox="0 0 344 154">
<defs>
<clipPath id="bnc"><rect width="344" height="154" rx="8"/></clipPath>
<linearGradient id="bn1" x1="0" y1="0" x2="1" y2="0"><stop offset="0" stop-color="#e4f4fb"/><stop offset=".28" stop-color="#d4f1f7"/><stop offset=".5" stop-color="#9af3f0"/><stop offset=".64" stop-color="#2ff0e8"/><stop offset=".82" stop-color="#36e6e8"/><stop offset="1" stop-color="#70c4ea"/></linearGradient>
<filter id="bl6" x="-30%" y="-30%" width="160%" height="160%"><feGaussianBlur stdDeviation="7"/></filter>
<filter id="bl2" x="-30%" y="-30%" width="160%" height="160%"><feGaussianBlur stdDeviation="1.5"/></filter>
<linearGradient id="bn5" x1="0" y1="0" x2="0" y2="1"><stop offset="0" stop-color="#7db3e8"/><stop offset=".45" stop-color="#7db3e8" stop-opacity=".75"/><stop offset=".85" stop-color="#7db3e8" stop-opacity="0"/></linearGradient>
</defs>
<g clip-path="url(#bnc)">
<rect width="344" height="154" fill="url(#bn1)"/>
<ellipse cx="30" cy="4" rx="60" ry="26" fill="#ffffff" filter="url(#bl6)" opacity=".9"/>
<path d="M-10 18 q45 2 46 50 q2 50 80 96 H-10z" fill="#8ea2e0" filter="url(#bl6)"/>
<path d="M-10 100 q30 20 50 64 H-10z" fill="#22eee6" filter="url(#bl6)"/>
<ellipse cx="195" cy="150" rx="60" ry="22" fill="#ffffff" filter="url(#bl6)" opacity=".85"/>
<path d="M290 -10 H354 V164 H344 q-40 -40 -46 -100 q-2 -40 -8 -74z" fill="url(#bn5)" filter="url(#bl6)"/>
<path d="M222 8 L250 12 L262 -6 L272 16 L304 22 L278 36 L282 64 L262 44 L238 58 L246 32z" fill="#58bfe8" opacity=".9" filter="url(#bl2)"/>
<rect x="305" y="13.5" width="28" height="20" rx="5" fill="#fff"/>
<path d="M316 19.5 L323 23.5 L316 27.5z" fill="#6bb8d8"/>
<rect x="64" y="25.5" width="153" height="26" rx="13" fill="#111"/>
<rect x="62" y="23.5" width="151" height="25" rx="12.5" fill="#fff" stroke="#111" stroke-width="1.3"/>
<text transform="translate(74,42.5) scale(1.02,1)" font-family="Liberation Mono" font-weight="700" font-size="14" fill="#111">YouTube Creator</text>
<text transform="translate(62,118) scale(.59,1)" font-family="Liberation Sans" font-weight="700" font-size="83" fill="#050505" stroke="#050505" stroke-width="1.2">RoundUp</text>
</g>
</svg>
<span class="t" style="left:1141.00px;top:669px;font-size:15px;line-height:19px;color:#0f0f0f;letter-spacing:-0.032px;-webkit-text-stroke:0.4px #0f0f0f;">See what&#x27;s trending in this month&#x27;s Creator</span>
<span class="t" style="left:1141.00px;top:693px;font-size:15px;line-height:19px;color:#0f0f0f;letter-spacing:-0.281px;-webkit-text-stroke:0.4px #0f0f0f;">Roundup</span>
<span class="t" style="left:1141.00px;top:721px;font-size:13px;line-height:17px;color:#606060;letter-spacing:-0.013px;">Catch up on the latest news and updates from YouTube</span>
<span class="t" style="left:1141.00px;top:741px;font-size:13px;line-height:17px;color:#606060;letter-spacing:-0.135px;">Creators</span>
<div class="b" style="left:1141px;top:782px;width:106px;height:36px;background:#f2f2f2;border-radius:18.0px;"></div>
<span class="t" style="left:1157.20px;top:790px;font-size:14px;line-height:18px;color:#0f0f0f;letter-spacing:0.016px;-webkit-text-stroke:0.35px #0f0f0f;">Check it out</span>
<span class="t" style="left:1141.80px;top:893px;font-size:18px;line-height:22px;color:#0f0f0f;letter-spacing:-0.042px;-webkit-text-stroke:0.35px #0f0f0f;">YouTube known issues</span>
<svg class="b" style="left:1144px;top:951px;" width="13" height="13" viewBox="0 0 13 13"><path d="M2.5 11.5 q0-7 4-7 q4 0 4 7z" fill="#e8375e"/><rect x="1.5" y="10.5" width="10" height="2" fill="#f08aa6"/><path d="M6.5 1.5 V3 M2.5 3 L3.5 4.2 M10.5 3 L9.5 4.2" stroke="#d93c5a" stroke-width=".8"/></svg>
<span class="t" style="left:1162.20px;top:949px;font-size:13px;line-height:17px;color:#0f0f0f;letter-spacing:-0.002px;">Issues with video uploads</span>
</body></html>
